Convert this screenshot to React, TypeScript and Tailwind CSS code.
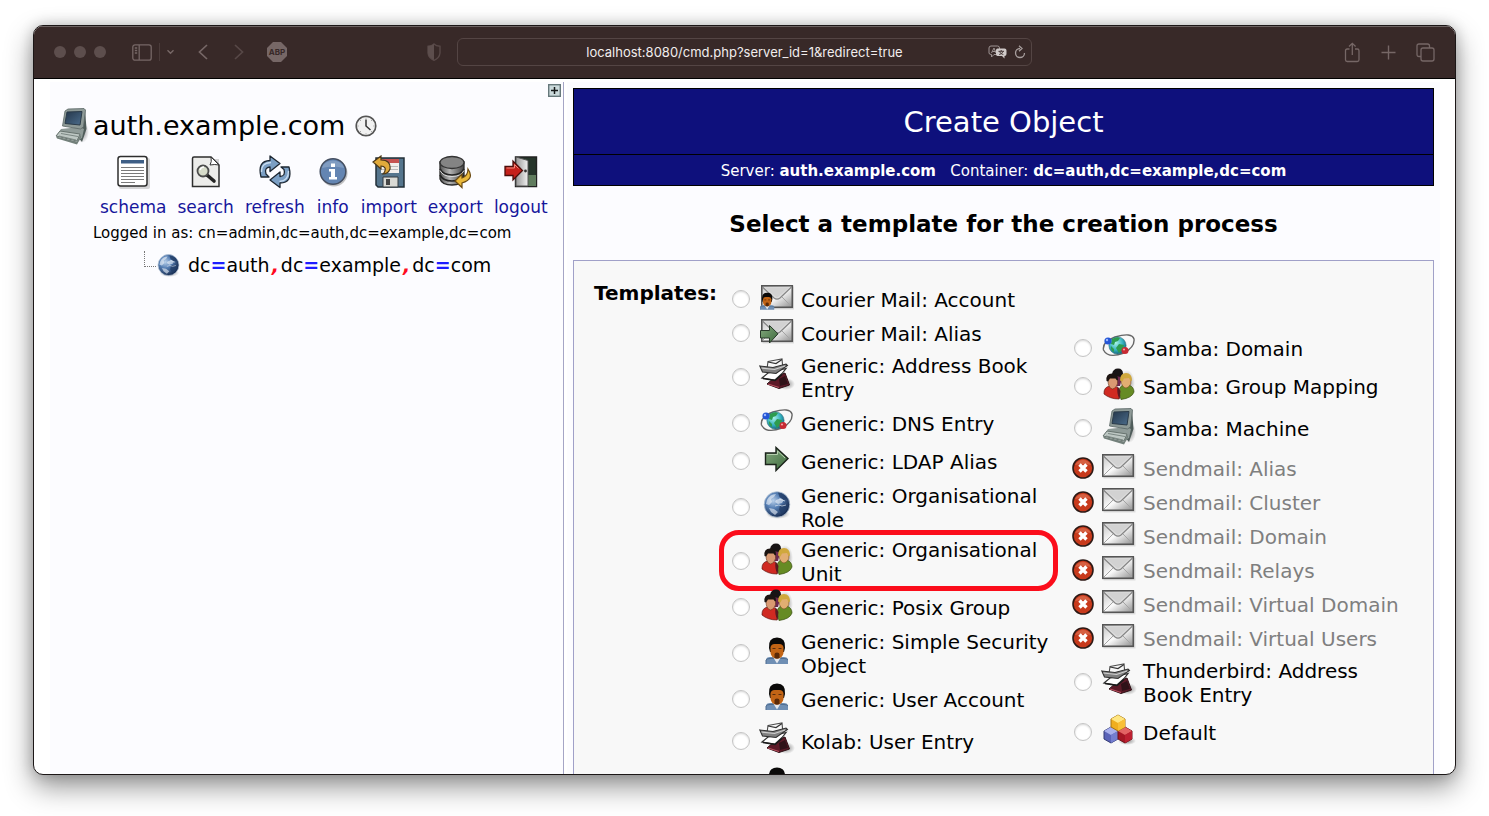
import React from "react";

type IconProps = { className?: string };

const Envelope = ({ x = 0 }: { x?: number }) => (
  <g transform={`translate(${x} 0)`}>
    <rect x="1.5" y="1.5" width="32" height="23" fill="#cfcfcf" opacity=".6" />
    <rect x=".8" y=".8" width="30.5" height="21.5" fill="url(#mailBg)" stroke="#555" strokeWidth="1.6" />
    <path d="M2 21 12 11M30 21 20 11" stroke="#a4a4a4" strokeWidth="1" />
    <path d="M1.500 2 13 13q3 2.200 6 0L30.500 2" fill="#dedede" stroke="#858585" strokeWidth="1.200" />
    <path d="M4 2.500 15 12q1 .8 2 0l11-9.500z" fill="#d2d2d2" />
  </g>
);

const Defs = () => (
  <svg width="0" height="0" className="absolute" aria-hidden="true">
    <defs>
      <linearGradient id="mailBg" x1="0" y1="0" x2="1" y2="1">
        <stop offset="0" stopColor="#c4c4c4" />
        <stop offset=".5" stopColor="#fafafa" />
        <stop offset="1" stopColor="#8e8e8e" />
      </linearGradient>
      <radialGradient id="earth" cx=".35" cy=".35" r=".65">
        <stop offset="0" stopColor="#b9d0ea" />
        <stop offset=".45" stopColor="#567fb4" />
        <stop offset="1" stopColor="#1b3157" />
      </radialGradient>
      <radialGradient id="teal" cx=".4" cy=".35" r=".7">
        <stop offset="0" stopColor="#a9f3e8" />
        <stop offset=".6" stopColor="#31aebd" />
        <stop offset="1" stopColor="#135c72" />
      </radialGradient>
      <linearGradient id="screen" x1="0" y1="0" x2="1" y2="1">
        <stop offset="0" stopColor="#24364a" />
        <stop offset="1" stopColor="#4c6d8c" />
      </linearGradient>
      <linearGradient id="greenArrow" x1="0" y1="0" x2="1" y2="1">
        <stop offset="0" stopColor="#86aa80" />
        <stop offset="1" stopColor="#3c6a3c" />
      </linearGradient>
      <linearGradient id="drum" x1="0" x2="1">
        <stop offset="0" stopColor="#555" />
        <stop offset=".4" stopColor="#b4b4b4" />
        <stop offset="1" stopColor="#444" />
      </linearGradient>
      <linearGradient id="door" x1="0" x2="1">
        <stop offset="0" stopColor="#999" />
        <stop offset="1" stopColor="#f2f2f2" />
      </linearGradient>
      <radialGradient id="soft">
        <stop offset="0" stopColor="#000" stopOpacity=".45" />
        <stop offset="1" stopColor="#000" stopOpacity="0" />
      </radialGradient>
    </defs>
  </svg>
);

const Person = () => (
  <>
    <path d="M1 27v-5q1-2 4-2h14q3 0 4 2v5z" fill="#6f8fb4" />
    <path d="M1 27v-4q1-1.500 4-1.500h14q3 0 4 1.500" fill="none" stroke="#4f6d90" strokeWidth="1" />
    <path d="M8 20h8l-4 6.500z" fill="#e6e9ee" />
    <path d="M4 11Q3 .5 12 .5T20 11l-1 4H5z" fill="#0b0a09" />
    <path d="M5.500 10.500q.5-3.500 4-3.500h5q3.500 0 4 3.500V16q-1 5.500-6.500 5.500T5.500 16z" fill="#c26415" />
    <path d="M9.500 21v-3.500q0-2 2.500-2t2.500 2V21q-2.500 1.500-5 0z" fill="#5b2a08" />
    <path d="M7.500 11.500h3M13.500 11.500h3" stroke="#5a2d0c" strokeWidth="1.200" />
  </>
);

const MailIcon = () => (
  <svg width="34" height="25" viewBox="0 0 34 25" className="mb-1">
    <Envelope />
  </svg>
);
const MailUserIcon = () => (
  <svg width="34" height="25" viewBox="0 0 34 25" className="mb-1">
    <Envelope x={1} />
    <g transform="translate(-.5 7.500) scale(.64)">
      <Person />
    </g>
  </svg>
);
const MailArrowIcon = () => (
  <svg width="34" height="25" viewBox="0 0 34 25" className="mb-1">
    <Envelope x={1} />
    <path d="M.5 11.500h9V6.500l8.500 8.300L9.500 24v-5h-9z" fill="url(#greenArrow)" stroke="#28382a" />
  </svg>
);
const UserIcon = () => (
  <svg width="24" height="28" viewBox="0 0 24 28" className="mb-1">
    <Person />
  </svg>
);
const BookIcon = () => (
  <svg width="36" height="34" viewBox="0 0 36 34" className="mb-1">
    <ellipse cx="27" cy="26" rx="9" ry="6" fill="url(#soft)" />
    <path d="m16 19 10-4 4.500 12L20 30.500 8 26z" fill="#5c1a28" stroke="#2c1015" />
    <path d="m20 21 6-3 3 8-8 2z" fill="#2f1218" />
    <path d="m9 26 11 3.500" stroke="#b8505f" strokeWidth="1.200" />
    <path d="M9 3.500 17 2l6-1 1 11-10 4-6-5z" fill="#f8f8f8" stroke="#4b4b4b" strokeWidth="1.100" />
    <path d="m9 4 8 1.500 6-4" fill="none" stroke="#333" strokeWidth="1.200" />
    <path d="m3 20 6-5 18-4.500-4 5L16 22z" fill="#fff" stroke="#333" strokeWidth="1.200" />
    <path d="m4 20.500 12 2 7-6" stroke="#1a1a1a" strokeWidth="1.500" fill="none" />
    <path d="M.8 8 14 9.500 27 6l1.500 1.500L17 15.500 3.500 14z" fill="#808080" stroke="#303030" strokeWidth="1.100" />
    <path d="m2.500 10 13 1.500L26 8" stroke="#cfcfcf" fill="none" strokeWidth="1.200" />
  </svg>
);
const DnsIcon = () => (
  <svg width="34" height="26" viewBox="0 0 34 26" className="mb-1">
    <path d="M1.500 17Q0 9 13 4 30-1 32 6q1 8-10 14-16 6-20.500-3z" fill="none" stroke="#666" strokeWidth="1.400" />
    <circle cx="15.500" cy="12.500" r="8.600" fill="url(#teal)" stroke="#2b6e7d" strokeWidth=".6" />
    <path d="M10 6q5-3 8-1l-2 3-3 1-1 3-3-1zM17 11l5 1-1 4-4 4-3-5zM9 13l3 3v3q-4-2-3-6z" fill="#2e9c4e" />
    <circle cx="6" cy="8" r="3.600" fill="#2456d6" />
    <circle cx="5" cy="7" r="1.200" fill="#9ab6ff" />
    <circle cx="23" cy="17.500" r="3.500" fill="#c82a32" />
    <circle cx="22" cy="16.500" r="1.100" fill="#f0a0a0" />
  </svg>
);
const ArrowIcon = () => (
  <svg width="26" height="26" viewBox="0 0 26 26" className="mb-1">
    <path d="M1.500 7h10.500V1.500L24 12.500 12 24.500V18.500H1.500z" fill="url(#greenArrow)" stroke="#1b231b" strokeWidth="1.400" />
    <path d="M3 8.500h10.500V5l7.500 7" stroke="#b6cfae" fill="none" />
  </svg>
);
const EarthIcon = ({ className = "size-7 mb-1" }: IconProps) => (
  <svg viewBox="0 0 28 28" className={className}>
    <ellipse cx="15" cy="23" rx="12" ry="5" fill="url(#soft)" />
    <circle cx="14" cy="13.500" r="12.800" fill="url(#earth)" stroke="#b4c4d6" strokeWidth=".8" />
    <path d="M4 9q3-6 9-6l-2 3-3 2 1 3-3 3-3-1zM13 9l5-2 3 2-2 3-4 1-3-2zM6 17l5 1 4 3-3 3-4-3z" fill="#eef4fa" opacity=".6" />
    <path d="M15 1.500q7 1 9.500 6.500l-4 1-4-3zM17 14l6-1 2 3q-2 5-6 7l-3-4z" fill="#223d68" opacity=".8" />
    <path d="M12 15q4-2 7 0l4-1M16 8l6 2" stroke="#dfe9f4" fill="none" opacity=".7" />
  </svg>
);
const GroupIcon = () => (
  <svg width="32" height="32" viewBox="0 0 32 32" className="mb-1">
    <ellipse cx="24" cy="15" rx="8" ry="13" fill="url(#soft)" />
    <path d="M9 6Q10 .5 15 .5T20 6l-3 9h-5z" fill="#181415" />
    <path d="M11 9q4-2 8 1l-2 8h-5z" fill="#6d2950" />
    <path d="M1 26q-.5-7 6-8h4q6 1 6 8l-1 5q-9 0-15-5z" fill="#d02a22" stroke="#611612" strokeWidth=".7" />
    <path d="M16 24q0-6 5-7h5q5 2 5 7-2 6-13 7.500z" fill="#668b24" stroke="#384e10" strokeWidth=".7" />
    <path d="m14.500 18 3 5-1 8.500q-3-6-2-13.500z" fill="#5a1a22" />
    <path d="M5 12q0-4 4.500-4t5 4-1 6q-2 3-4 3t-3.500-3Q5 16 5 12z" fill="#d99a72" stroke="#67371e" strokeWidth=".6" />
    <path d="M3.500 13Q2.500 5.500 9 5.500T15 12l-1 .5-1.500-2H7l-2 3z" fill="#1c1411" />
    <path d="M18 12q0-5 5-5t5 5-1 5q-2 3-4 3t-3.500-2.500Q18 16 18 12z" fill="#e2ae72" stroke="#7b5125" strokeWidth=".6" />
    <path d="M17 12.500Q17 5 23 5t6 7.500l-1.500.5-1.500-3-5 .5-1.500 3z" fill="#d0a83c" />
  </svg>
);
const ComputerIcon = () => (
  <svg width="34" height="37" viewBox="0 0 34 37" className="mb-1">
    <ellipse cx="27" cy="24" rx="7" ry="11" fill="url(#soft)" />
    <path d="m26 4 4-3 1.500 20L27 34l-4-5z" fill="#4f5c5a" />
    <path d="m6 21 19-2 4 2-2 9-5 3-21-5z" fill="#8f9b98" />
    <path d="m10 3 3-2 16-.5 1.500 1.500-2 17-3 2L7.500 18z" fill="#8e9a97" stroke="#5b6766" strokeWidth=".8" />
    <path d="m12 4 15-.5L25 17l-15-1.500z" fill="url(#screen)" stroke="#2b3b49" />
    <path d="m5 23 20 3-3 7-21-5z" fill="#bdc7c3" stroke="#67736f" />
    <path d="m6 25.500 17 3M4 28l17 4" stroke="#7b8783" />
    <path d="m1 28.500 21 5 4-7v3l-4 7-20-6z" fill="#73807b" />
  </svg>
);
const CubesIcon = () => (
  <svg width="34" height="32" viewBox="0 0 34 32" className="mb-1">
    <ellipse cx="25" cy="27" rx="9" ry="4" fill="url(#soft)" />
    <path d="m9 13 7 4v8l-7 4-7-4v-8z" fill="#5a63b8" stroke="#333b75" />
    <path d="m9 13 7 4-7 4-7-4z" fill="#a9b0ec" />
    <path d="m9 21 7-4v8l-7 4z" fill="#747ed0" />
    <path d="m23 13 7 4v8l-7 4-7-4v-8z" fill="#a51724" stroke="#6b1119" />
    <path d="m23 13 7 4-7 4-7-4z" fill="#e36464" />
    <path d="m23 21 7-4v8l-7 4z" fill="#bd2031" />
    <path d="m16 1 7 4v8l-7 4-7-4V5z" fill="#f0ae1e" stroke="#a67414" />
    <path d="m16 1 7 4-7 4-7-4z" fill="#ffe680" />
    <path d="m16 9 7-4v8l-7 4z" fill="#f9bf36" />
  </svg>
);
const DeniedIcon = () => (
  <svg width="22" height="22" viewBox="0 0 22 22" role="img" aria-label="Unavailable">
    <circle cx="11" cy="11" r="10" fill="#c83a1c" stroke="#2d1915" strokeWidth="1.600" />
    <path d="M3 8q3-5 8-5t8 5q-8-2-16 0z" fill="#df7a5c" opacity=".6" />
    <path d="m7.500 7.500 7 7m0-7-7 7" stroke="#fff" strokeWidth="3.400" />
  </svg>
);

const SchemaIcon = () => (
  <svg width="34" height="34" viewBox="0 0 34 34">
    <rect x="3" y="3" width="31" height="31" rx="2" fill="#bbb" opacity=".6" />
    <rect x="2" y="1.500" width="29" height="29.500" rx="2.500" fill="#fff" stroke="#2e2e2e" strokeWidth="1.500" />
    <rect x="5" y="5" width="23" height="3.500" fill="#3e5f86" />
    <path d="M5 12.500h23M5 15.500h23M5 18.500h23M5 21.500h23M5 24.500h23M5 27.500h14" stroke="#7a7a7a" strokeWidth="1.200" />
  </svg>
);
const SearchIcon = () => (
  <svg width="34" height="34" viewBox="0 0 34 34">
    <path d="M4 4h26v28H5z" fill="#aaa" opacity=".5" />
    <path d="M5 2h17l8 8v21.500H3.500V3.500Q3.500 2 5 2z" fill="#ececea" stroke="#2d2d2d" strokeWidth="1.500" />
    <path d="M22 2q1 5-1 8 5-1 9 0z" fill="#fff" stroke="#333" />
    <path d="m18 20 7 6" stroke="#222" strokeWidth="3.600" strokeLinecap="round" />
    <circle cx="14" cy="16" r="5.500" fill="#d7dcca" stroke="#4c4c4c" strokeWidth="1.800" />
    <path d="M11 15q1-3 4-3" stroke="#fff" strokeWidth="1.500" fill="none" />
  </svg>
);
const RefreshIcon = () => (
  <svg width="34" height="34" viewBox="0 0 34 34">
    <g stroke="#1d2732" strokeWidth="1.300" fill="#7b9fc4" strokeLinejoin="round">
      <path d="M3 22Q-1 6 12 5.500V1l10 7.500-10 8V12q-6 .5-4 7l3 3z" />
      <path d="M31 12q4 16-9 16v4.500L12 25l10-8v4.500q6-.5 4-7L23 12z" />
    </g>
    <path d="M3.500 17Q3 8 13 7.500M30.500 16q0 10-9 10.500" stroke="#c8dcf0" strokeWidth="1.300" fill="none" />
  </svg>
);
const InfoIcon = () => (
  <svg width="34" height="34" viewBox="0 0 34 34">
    <circle cx="18" cy="18" r="13.500" fill="#9a9a9a" opacity=".6" />
    <circle cx="17" cy="16.500" r="12.800" fill="#6485b2" stroke="#454f61" strokeWidth="1.500" />
    <path d="M6 13Q8 6 17 5.500 26 6 28 13q-11-3-22 0z" fill="#93abcc" opacity=".6" />
    <path d="M15 8.500h4v3.500h-4zM13 14h6v8h2v2.500h-8V22h2v-5.500h-2z" fill="#fff" />
  </svg>
);
const ImportIcon = () => (
  <svg width="34" height="34" viewBox="0 0 34 34">
    <path d="M4 3h28v29H6l-2-2z" fill="#55758d" stroke="#222f38" strokeWidth="1.500" />
    <path d="M9 4h18v14H9z" fill="#f2efed" />
    <path d="M9 4h18v4H9z" fill="#c65352" />
    <path d="M10 11.500h16M10 14.500h16" stroke="#bbb" />
    <path d="M11 22h15v10H11z" fill="#d9d9d4" stroke="#323a40" />
    <path d="M14 24h4v6h-4z" fill="#444" />
    <path d="m1 7 8-6v4q10 0 9 9-2 5-7 5 3-3 2-6-1-2-4-2v3z" fill="#e1aa3b" stroke="#4d3919" strokeWidth="1.200" />
  </svg>
);
const ExportIcon = () => (
  <svg width="34" height="34" viewBox="0 0 34 34">
    <path d="M2 7v17q2 6 12 6t12-6V7z" fill="url(#drum)" stroke="#292929" strokeWidth="1.300" />
    <ellipse cx="14" cy="7.500" rx="12" ry="6" fill="#848484" stroke="#343434" strokeWidth="1.300" />
    <path d="M2 14q3 6 12 6t12-6M2 20q3 6 12 6t12-6" fill="none" stroke="#252525" strokeWidth="1.700" />
    <path d="M2 15.500q3 6 12 6t12-6" fill="none" stroke="#ddd" />
    <path d="M30 14q7 10-6 14v4.500L17 26l7-7v4q6-2 6-9z" fill="#eab93b" stroke="#6b4a12" strokeWidth="1.200" />
  </svg>
);
const LogoutIcon = () => (
  <svg width="34" height="34" viewBox="0 0 34 34">
    <path d="M11.500 2h21v29.500h-21z" fill="#26352b" stroke="#222" strokeWidth="1.400" />
    <path d="M24 20h8v11h-8z" fill="#607c5e" />
    <path d="m12 2 12 3.500V31H12z" fill="url(#door)" stroke="#555" />
    <circle cx="21.500" cy="16" r="1.400" fill="#333" />
    <path d="M1 11.500h8V6l9.500 9.500L9 25v-4.500H1z" fill="#c5211b" stroke="#4b0e0b" strokeWidth="1.300" />
    <path d="M2.500 13h8V9.500l4 4" stroke="#ef8a7c" fill="none" />
  </svg>
);
const ClockIcon = () => (
  <svg width="22" height="22" viewBox="0 0 22 22">
    <circle cx="11" cy="11" r="9.800" fill="#f1f1f1" stroke="#555" strokeWidth="1.600" />
    <path d="M11 4.500V11l4.500 4" stroke="#333" strokeWidth="1.500" fill="none" />
    <path d="M11 2.500v1M11 18.500v1M2.500 11h1M18.500 11h1M5 5l.7.7M17 5l-.7.7M5 17l.7-.7M17 17l-.7-.7" stroke="#888" />
  </svg>
);

type Item = { name: string; icon: React.FC; row: string; disabled?: boolean; marked?: boolean };

const leftItems: Item[] = [
  { name: "Courier Mail: Account", icon: MailUserIcon, row: "h-[34px]" },
  { name: "Courier Mail: Alias", icon: MailArrowIcon, row: "h-[34px]" },
  { name: "Generic: Address Book Entry", icon: BookIcon, row: "h-[54px]" },
  { name: "Generic: DNS Entry", icon: DnsIcon, row: "h-[38px]" },
  { name: "Generic: LDAP Alias", icon: ArrowIcon, row: "h-[38px]" },
  { name: "Generic: Organisational Role", icon: EarthIcon, row: "h-[54px]" },
  { name: "Generic: Organisational Unit", icon: GroupIcon, row: "h-[54px]", marked: true },
  { name: "Generic: Posix Group", icon: GroupIcon, row: "h-[38px]" },
  { name: "Generic: Simple Security Object", icon: UserIcon, row: "h-[54px]" },
  { name: "Generic: User Account", icon: UserIcon, row: "h-[38px]" },
  { name: "Kolab: User Entry", icon: BookIcon, row: "h-[46px]" },
  { name: "", icon: UserIcon, row: "h-[38px]" },
];

const rightItems: Item[] = [
  { name: "Samba: Domain", icon: DnsIcon, row: "h-[38px]" },
  { name: "Samba: Group Mapping", icon: GroupIcon, row: "h-[38px]" },
  { name: "Samba: Machine", icon: ComputerIcon, row: "h-[46px]" },
  { name: "Sendmail: Alias", icon: MailIcon, row: "h-[34px]", disabled: true },
  { name: "Sendmail: Cluster", icon: MailIcon, row: "h-[34px]", disabled: true },
  { name: "Sendmail: Domain", icon: MailIcon, row: "h-[34px]", disabled: true },
  { name: "Sendmail: Relays", icon: MailIcon, row: "h-[34px]", disabled: true },
  { name: "Sendmail: Virtual Domain", icon: MailIcon, row: "h-[34px]", disabled: true },
  { name: "Sendmail: Virtual Users", icon: MailIcon, row: "h-[34px]", disabled: true },
  { name: "Thunderbird: Address Book Entry", icon: BookIcon, row: "h-[54px]" },
  { name: "Default", icon: CubesIcon, row: "h-[46px]" },
];

const TemplateList = ({ items, group, className }: { items: Item[]; group: string; className: string }) => (
  <ul className={className}>
    {items.map(({ name, icon: Icon, row, disabled, marked }, i) => {
      const id = `${group}-${i}`;
      return (
        <li key={id} className={`relative flex items-center ${row}`}>
          <span className="flex w-[22px] shrink-0 justify-center">
            {disabled ? (
              <DeniedIcon />
            ) : (
              <input
                id={id}
                type="radio"
                name="template"
                aria-label={name || "User"}
                className="size-[18px] appearance-none rounded-full border border-[#c4c4c4] bg-white shadow-[inset_0_1px_2px_#d8d8d8] checked:border-[5px] checked:border-[#2870e0]"
              />
            )}
          </span>
          <span className="ml-[5px] flex w-10 shrink-0 justify-center" aria-hidden="true">
            <Icon />
          </span>
          {disabled ? (
            <span className="ml-1 pt-0.5 text-[#7f7f7f]">{name}</span>
          ) : (
            <label htmlFor={id} className="ml-1 pt-0.5">
              {name}
            </label>
          )}
          {marked && (
            <span className="pointer-events-none absolute -top-1 -right-1 -bottom-[3px] -left-[11px] rounded-[20px] border-5 border-[#fb0d1b]" />
          )}
        </li>
      );
    })}
  </ul>
);

const actions: { name: string; icon: React.FC }[] = [
  { name: "schema", icon: SchemaIcon },
  { name: "search", icon: SearchIcon },
  { name: "refresh", icon: RefreshIcon },
  { name: "info", icon: InfoIcon },
  { name: "import", icon: ImportIcon },
  { name: "export", icon: ExportIcon },
  { name: "logout", icon: LogoutIcon },
];

const BrowserBar = () => (
  <header className="flex h-[53px] shrink-0 items-center border-b border-black bg-[#382928] px-5 text-[#766766] shadow-[inset_0_1px_0_#6d6362]">
    <div className="flex flex-1 items-center">
      <div className="flex gap-2">
        <span className="size-3 rounded-full bg-[#5d4e4d]" />
        <span className="size-3 rounded-full bg-[#5d4e4d]" />
        <span className="size-3 rounded-full bg-[#5d4e4d]" />
      </div>
      <button type="button" aria-label="Sidebar" className="ml-[26px]">
        <svg width="20" height="17" viewBox="0 0 20 17" fill="none" stroke="currentColor" strokeWidth="1.300">
          <rect x=".8" y=".8" width="18.400" height="15.400" rx="2.200" />
          <path d="M7.200 1v15M2.800 4h2.400M2.800 6.500h2.400M2.800 9h2.400" />
        </svg>
      </button>
      <span className="ml-[7px] h-[18px] w-px bg-[#4b3c3b]" />
      <button type="button" aria-label="Tab groups" className="ml-1.5">
        <svg width="9" height="6" viewBox="0 0 9 6" fill="none" stroke="currentColor" strokeWidth="1.400">
          <path d="m1.500 1.200 3 3 3-3" />
        </svg>
      </button>
      <button type="button" aria-label="Back" className="ml-[23px]">
        <svg width="10" height="16" viewBox="0 0 10 16" fill="none" stroke="currentColor" strokeWidth="1.700">
          <path d="M9 1 1.500 8 9 15" />
        </svg>
      </button>
      <button type="button" aria-label="Forward" className="ml-[26px] text-[#574847]">
        <svg width="10" height="16" viewBox="0 0 10 16" fill="none" stroke="currentColor" strokeWidth="1.700">
          <path d="m1 1 7.500 7L1 15" />
        </svg>
      </button>
      <button
        type="button"
        aria-label="AdBlock Plus"
        className="ml-[23px] flex size-5 items-center justify-center bg-[#766766] text-[8px] leading-none font-bold text-[#382928] [clip-path:polygon(30%_0,70%_0,100%_30%,100%_70%,70%_100%,30%_100%,0_70%,0_30%)]"
      >
        ABP
      </button>
      <svg width="14" height="18" viewBox="0 0 14 18" className="mr-4 ml-auto" aria-hidden="true">
        <path d="M7 1Q9 3 13 3.300V10q-.5 5-6 7.300Q1.500 15 1 10V3.300Q5 3 7 1z" fill="none" stroke="#574847" strokeWidth="1.400" />
        <path d="M7 1v16Q1.500 15 1 10V3.300Q5 3 7 1z" fill="#5d4e4d" />
      </svg>
    </div>
    <div className="relative w-[575px]">
      <input
        type="text"
        aria-label="Address"
        defaultValue="localhost:8080/cmd.php?server_id=1&redirect=true"
        className="block h-7 w-full rounded-md border border-[#544544] bg-transparent px-12 text-center text-[13px] text-[#f1eded]"
      />
      <div className="absolute inset-y-0 right-1.5 flex items-center gap-1.5">
        <svg width="20" height="14" viewBox="0 0 20 14" aria-hidden="true">
          <path d="M3 1h6.500q2 0 2 2v5q0 1.500-2 1.500H6L3.500 12V9.500Q1 9.500 1 8V3q0-2 2-2z" fill="none" stroke="#9d9392" />
          <path d="M3.500 8 6 3l2 5M4.500 6.500h3" stroke="#9d9392" fill="none" />
          <path d="M9.500 3.500h7q2 0 2 2V9q0 2-2 2v2.500L14 11H9.500Q8 11 8 9V5.500q0-2 1.500-2z" fill="#cfc9c8" />
          <path d="M13.200 5v1.300M10.500 6.300H16M11.300 6.500q2 3 4 3M15.200 6.500q-2 3-4 3" stroke="#382928" strokeWidth=".9" fill="none" />
        </svg>
        <button type="button" aria-label="Reload">
          <svg width="12" height="14" viewBox="0 0 12 14" fill="none" stroke="#a79e9d" strokeWidth="1.300">
            <path d="M6 3.500A4.500 4.500 0 1 0 10.500 8M5 .8l3 2.700-3 2.700" />
          </svg>
        </button>
      </div>
    </div>
    <div className="flex flex-1 items-center justify-end gap-5">
      <button type="button" aria-label="Share">
        <svg width="17" height="21" viewBox="0 0 17 21" fill="none" stroke="currentColor" strokeWidth="1.300">
          <path d="M5.500 7H3.200Q1.500 7 1.500 8.700v9q0 1.800 1.700 1.800h10.100q1.700 0 1.700-1.800v-9Q15 7 13.300 7H11M8.300 13V1.500M5 4.500l3.300-3.200 3.300 3.200" />
        </svg>
      </button>
      <button type="button" aria-label="New tab">
        <svg width="15" height="15" viewBox="0 0 15 15" stroke="currentColor" strokeWidth="1.400">
          <path d="M7.500.5v14M.5 7.500h14" />
        </svg>
      </button>
      <button type="button" aria-label="Tab overview">
        <svg width="19" height="19" viewBox="0 0 19 19" fill="none" stroke="currentColor" strokeWidth="1.300">
          <rect x="5" y="5" width="13" height="13" rx="2" />
          <path d="M5 13.500H3q-2 0-2-2V3q0-2 2-2h8.500q2 0 2 2v2" />
        </svg>
      </button>
    </div>
  </header>
);

const Eq = () => <b className="text-[#1d1dff]">=</b>;
const Comma = () => <b className="px-0.5 text-[#ff0a1e] italic">,</b>;

export default function App() {
  return (
    <div className="h-screen overflow-hidden bg-white px-[33px] pt-[25px] pb-[41px] font-['Inter',sans-serif]">
      <Defs />
      <div className="flex h-full flex-col overflow-hidden rounded-[10px] border border-[#1c1717] bg-white shadow-[0_12px_28px_rgba(0,0,0,0.42),0_0_14px_rgba(0,0,0,0.2)]">
        <BrowserBar />
        <div className="flex min-h-0 flex-1 gap-[3px] pt-[3px] pr-[15px] pl-4 font-['Verdana','DejaVu_Sans',sans-serif] text-black">
          <aside className="w-[514px] shrink-0 border-r border-[#a5a5c6] bg-[#fcfcff] pt-0.5">
            <div className="flex justify-end pr-0.5">
              <button type="button" aria-label="Expand">
                <svg width="13" height="13" viewBox="0 0 13 13" className="block">
                  <rect x=".7" y=".7" width="11.600" height="11.600" fill="#cbdadc" stroke="#66787b" strokeWidth="1.400" />
                  <path d="M6.500 3v7M3 6.500h7" stroke="#15191a" strokeWidth="1.500" />
                </svg>
              </button>
            </div>
            <div className="mt-2.5 flex h-[38px] items-center pl-[5px]">
              <span className="pt-1">
                <ComputerIcon />
              </span>
              <h1 className="ml-1 text-[27px] leading-9">auth.example.com</h1>
              <span className="ml-2.5">
                <ClockIcon />
              </span>
            </div>
            <nav className="mt-2.5 flex gap-[11px] pl-[50px]">
              {actions.map(({ name, icon: Icon }) => (
                <a key={name} href="#" className="flex flex-col items-center text-[17px] leading-6 text-[#16169c]">
                  <Icon />
                  <span className="mt-1.5">{name}</span>
                </a>
              ))}
            </nav>
            <p className="mt-1 pl-[43px] text-[15px] leading-5">Logged in as: cn=admin,dc=auth,dc=example,dc=com</p>
            <div className="mt-2 flex h-7 items-center pl-[94px]">
              <span className="mb-3 h-4 w-3 border-b border-l border-dotted border-[#777]" />
              <EarthIcon className="ml-px size-[23px]" />
              <a href="#" className="ml-2 text-[19px] leading-7">
                dc
                <Eq />
                auth
                <Comma />
                dc
                <Eq />
                example
                <Comma />
                dc
                <Eq />
                com
              </a>
            </div>
          </aside>
          <main className="flex min-w-0 flex-1 flex-col bg-[#fcfcff] px-1.5 pt-1.5">
            <div className="shrink-0 border border-black bg-[#0e107c] text-center text-white">
              <h2 className="border-b border-black pt-[15px] pb-[13px] text-[29px] leading-[37px]">Create Object</h2>
              <p className="pt-1.5 pb-1 text-[15px] leading-5">
                Server: <b>auth.example.com</b> &nbsp; Container: <b>dc=auth,dc=example,dc=com</b>
              </p>
            </div>
            <h3 className="shrink-0 pt-[23px] pb-[21px] text-center text-[23px] leading-[30px] font-bold">
              Select a template for the creation process
            </h3>
            <section
              role="radiogroup"
              aria-labelledby="templates-label"
              className="flex min-h-0 flex-1 items-start overflow-hidden border border-b-0 border-[#a0a0c8] bg-[#f8f8f8] pl-5 text-[20px] leading-6"
            >
              <div id="templates-label" className="w-[136px] shrink-0 pt-5 font-bold">
                Templates:
              </div>
              <TemplateList items={leftItems} group="left" className="w-[324px] shrink-0 pt-[21px]" />
              <TemplateList items={rightItems} group="right" className="ml-[18px] w-[336px] shrink-0 pt-[68px]" />
            </section>
          </main>
        </div>
      </div>
    </div>
  );
}
